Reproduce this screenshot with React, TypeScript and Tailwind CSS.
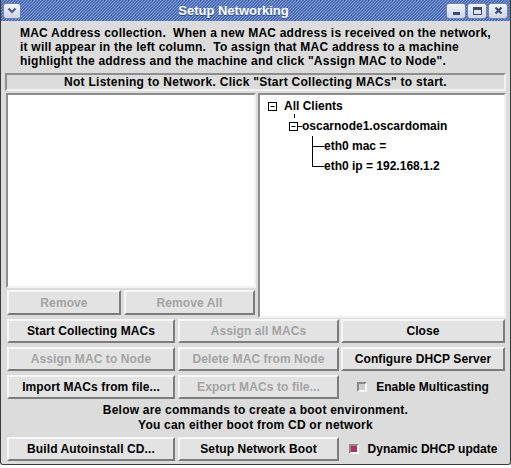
import React from "react";

function TitleButton({ children, w = "w-[20px]" }: { children: React.ReactNode; w?: string }) {
  return (
    <div
      className={`flex h-[16px] ${w} items-center justify-center rounded-[3px] border border-[#6f82b0] bg-gradient-to-b from-[#f2f4f9] to-[#cdd5e7]`}
    >
      {children}
    </div>
  );
}

function TkButton({
  label,
  disabled,
  className = "",
}: {
  label: string;
  disabled?: boolean;
  className?: string;
}) {
  return (
    <button
      type="button"
      className={`flex h-[24px] items-center justify-center border-2 border-t-[#f7f7f7] border-l-[#f7f7f7] border-b-[#7c7c7c] border-r-[#7c7c7c] bg-[#e3e3e3] text-[12px] font-bold tracking-[0.1px] ${
        disabled ? "text-[#a3a3a3]" : "text-black"
      } ${className}`}
    >
      {label}
    </button>
  );
}

function CheckBox({ label, checked }: { label: string; checked?: boolean }) {
  return (
    <div className="flex items-center justify-center gap-[9px] text-[12px] font-bold text-black">
      <span
        className={`h-[10px] w-[10px] border-2 border-t-[#8a8a8a] border-l-[#8a8a8a] border-b-[#f7f7f7] border-r-[#f7f7f7] ${
          checked ? "bg-[#b03060]" : "bg-[#cfcfcf]"
        }`}
      />
      <span>{label}</span>
    </div>
  );
}

const TREE_ROWS = [
  { label: "All Clients", pad: "pl-[24px]" },
  { label: "oscarnode1.oscardomain", pad: "pl-[42px]" },
  { label: "eth0 mac =", pad: "pl-[64px]" },
  { label: "eth0 ip = 192.168.1.2", pad: "pl-[64px]" },
];

export default function App() {
  return (
    <div className="h-[468px] w-[511px] bg-white font-['Liberation_Sans',Arial,sans-serif]">
      <div className="flex h-[465px] w-[511px] flex-col overflow-hidden rounded-b-[3px] border-x border-b border-[#3a3a3a] bg-[#dcdcdc]">
        {/* title bar */}
        <div className="-mx-px flex h-[21px] shrink-0 items-center bg-[repeating-linear-gradient(135deg,#4d6db4_0px,#4d6db4_1.3px,#7f9ad5_1.3px,#7f9ad5_2.12px)] px-[3px]">
          <TitleButton w="w-[18px]">
            <svg width="10" height="7" viewBox="0 0 10 7">
              <path d="M1.5 1.5 L5 5 L8.5 1.5" fill="none" stroke="#4a5c86" strokeWidth="2" />
            </svg>
          </TitleButton>
          <div className="flex-1 text-center text-[13px] font-bold leading-none text-white [text-shadow:0_1px_0_#2f4a85]">
            Setup Networking
          </div>
          <div className="flex gap-[1px]">
            <TitleButton>
              <div className="mt-[5px] h-[3px] w-[7px] bg-[#3c4c72]" />
            </TitleButton>
            <TitleButton>
              <div className="h-[8px] w-[9px] border border-t-[3px] border-[#3c4c72]" />
            </TitleButton>
            <TitleButton>
              <svg width="9" height="9" viewBox="0 0 9 9">
                <path d="M1.5 1.5 L7.5 7.5 M7.5 1.5 L1.5 7.5" stroke="#3c4c72" strokeWidth="2.2" />
              </svg>
            </TitleButton>
          </div>
        </div>

        {/* intro text */}
        <div className="whitespace-pre pl-[19px] pt-[5px] text-[12px] font-bold leading-[14px] tracking-[0.22px] text-black">
          <div>{"MAC Address collection.  When a new MAC address is received on the network,"}</div>
          <div>{"it will appear in the left column.  To assign that MAC address to a machine"}</div>
          <div>{'highlight the address and the machine and click "Assign MAC to Node".'}</div>
        </div>

        {/* status */}
        <div className="ml-[4px] mt-[5px] flex h-[18px] w-[501px] items-center justify-center border-2 border-t-[#8e8e8e] border-l-[#8e8e8e] border-b-[#f2f2f2] border-r-[#f2f2f2] text-[12px] font-bold tracking-[0.27px] text-black">
          {'Not Listening to Network. Click "Start Collecting MACs" to start.'}
        </div>

        {/* lists */}
        <div className="ml-[5px] mt-[2px] flex h-[225px] gap-[2px]">
          <div className="flex w-[250px] flex-col">
            <div className="h-[195px] border-2 border-t-[#8e8e8e] border-l-[#8e8e8e] border-b-[#f2f2f2] border-r-[#f2f2f2] bg-white" />
            <div className="mt-[2px] flex gap-[3px] pl-[1px]">
              <TkButton label="Remove" disabled className="h-[25px] w-[114px]" />
              <TkButton label="Remove All" disabled className="h-[25px] w-[131px]" />
            </div>
          </div>
          <div className="w-[248px] border-2 border-t-[#8e8e8e] border-l-[#8e8e8e] border-b-[#f2f2f2] border-r-[#f2f2f2] bg-white">
            <div className="relative pt-[1px] text-[12px] font-bold text-black">
              {TREE_ROWS.map((r) => (
                <div key={r.label} className={`flex h-[20px] items-center ${r.pad}`}>
                  {r.label}
                </div>
              ))}
              <svg className="absolute left-0 top-0" width="120" height="90" viewBox="0 0 120 90">
                <g fill="none" stroke="#000" strokeWidth="1">
                  <rect x="8.5" y="7.5" width="8" height="8" />
                  <path d="M10.5 11.5 H14.5" />
                  <path d="M34.5 19 V23" />
                  <rect x="29.5" y="27.5" width="8" height="8" />
                  <path d="M31.5 31.5 H35.5" />
                  <path d="M37.5 31.5 H42" />
                  <path d="M52.5 41 V71.5" />
                  <path d="M52.5 51.5 H64" />
                  <path d="M52.5 71.5 H64" />
                </g>
              </svg>
            </div>
          </div>
        </div>

        {/* button grid */}
        <div className="ml-[6px] mt-[1px] flex flex-col gap-[4px]">
          <div className="flex">
            <TkButton label="Start Collecting MACs" className="w-[168px]" />
            <TkButton label="Assign all MACs" disabled className="ml-[3px] w-[161px]" />
            <TkButton label="Close" className="ml-[2px] w-[164px]" />
          </div>
          <div className="flex">
            <TkButton label="Assign MAC to Node" disabled className="w-[168px]" />
            <TkButton label="Delete MAC from Node" disabled className="ml-[3px] w-[161px]" />
            <TkButton label="Configure DHCP Server" className="ml-[2px] w-[164px]" />
          </div>
          <div className="flex">
            <TkButton label="Import MACs from file..." className="w-[168px]" />
            <TkButton label="Export MACs to file..." disabled className="ml-[3px] w-[161px]" />
            <div className="ml-[2px] flex w-[164px] items-center justify-center">
              <CheckBox label="Enable Multicasting" />
            </div>
          </div>
        </div>

        <div className="mt-[4px] text-center text-[12px] font-bold leading-[15px] tracking-[0.22px] text-black">
          <div>Below are commands to create a boot environment.</div>
          <div>You can either boot from CD or network</div>
        </div>

        <div className="ml-[6px] mt-[4px] flex">
          <TkButton label="Build Autoinstall CD..." className="w-[168px]" />
          <TkButton label="Setup Network Boot" className="ml-[3px] w-[161px]" />
          <div className="ml-[2px] flex w-[164px] items-center justify-center">
            <CheckBox label="Dynamic DHCP update" checked />
          </div>
        </div>
      </div>
    </div>
  );
}
